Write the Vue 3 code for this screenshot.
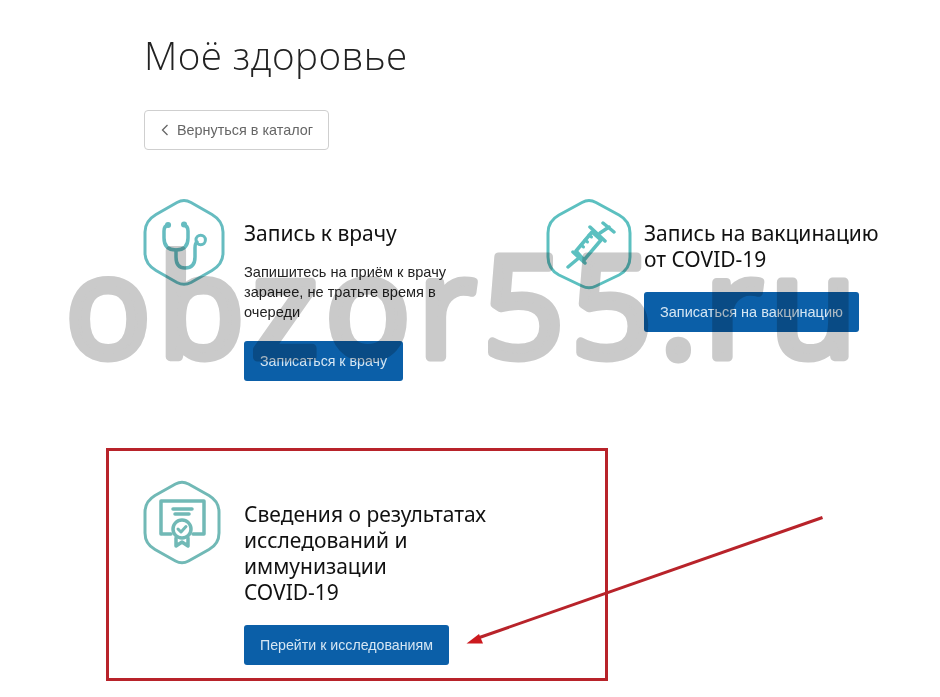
<template>
  <div class="page">
    <h1 class="title">Моё здоровье</h1>
    <a class="back">
      <svg class="chev" width="8" height="12" viewBox="0 0 8 12"><path d="M6.500 1 1.500 6l5 5" /></svg>
      <span>Вернуться в каталог</span>
    </a>
    <div class="grid">
      <section class="card">
        <svg class="icon" width="90" height="95" viewBox="0 0 90 95">
          <g class="ln c1">
            <path d="M37 7.500Q44 3.500 51 7.500L72 19.500Q83 26 83 37V58Q83 69 72 75.500L51 87.500Q44 91 37 87.500L16 75.500Q5 69 5 58V37Q5 26 16 19.500Z" />
            <path class="thick" d="M28 30Q24 31 24 36V43Q24 55 36 55Q48 55 48 43V36Q48 31 44 30" />
            <path class="thick" d="M36 55V62Q36 73 45 73Q55 73 55 62V53Q55 48 57 47" />
            <circle cx="60.700" cy="45" r="4.700" />
            <path class="dot" d="M28 30h.1M44 29.500h.1" />
          </g>
        </svg>
        <div class="body">
          <h2>Запись к врачу</h2>
          <p>Запишитесь на приём к врачу<br />заранее, не тратьте время в<br />очереди</p>
          <a class="btn">Записаться к врачу</a>
        </div>
      </section>
      <section class="card">
        <svg class="icon shift" width="90" height="95" viewBox="0 0 90 95">
          <g class="ln c2">
            <path d="M39 7.500Q46 3.500 53 7.500L76 20Q87 26 87 38V62Q87 74 76 80L53 91Q46 94.500 39 91L16 80Q5 74 5 62V38Q5 26 16 20Z" />
            <path class="thick" d="M33 56 49 37 58 45 41 65Z" />
            <path class="thick" d="M37 62 25 72M30 57 42 68M47 32 62 46M57 38 66 32M60 28 71 37" />
            <path d="M38 50 40.500 52M42 45 44.500 47M46 40 48.500 42" />
          </g>
        </svg>
        <div class="body">
          <h2>Запись на вакцинацию<br />от COVID-19</h2>
          <a class="btn wide">Записаться на вакцинацию</a>
        </div>
      </section>
      <section class="card">
        <svg class="icon third" width="85" height="90" viewBox="0 -1 85 90">
          <g class="ln c3">
            <path d="M34.500 7Q41 3.500 47.500 7L68 18.500Q78 24.500 78 35V56Q78 67 68 72.500L47.500 84Q41 87.500 34.500 84L14 72.500Q4 67 4 56V35Q4 24.500 14 18.500Z" />
            <path class="thick" d="M30 57H20V24H63V57H52" />
            <path class="thick" d="M32 32H51M34 37H48" />
            <circle class="thick" cx="41" cy="52" r="9" />
            <path d="M37 52 40 55 45 49.500" />
            <path class="thick" d="M35 61V69L41 65 47 69V61" />
          </g>
        </svg>
        <div class="body">
          <h2>Сведения о результатах<br />исследований и<br />иммунизации<br />COVID-19</h2>
          <a class="btn">Перейти к исследованиям</a>
        </div>
      </section>
    </div>

    <svg class="mark" width="940" height="697" viewBox="0 0 940 697">
      <text x="66" y="357" textLength="790" lengthAdjust="spacing">obzor55.ru</text>
    </svg>
    <div class="frame"></div>
    <svg class="arrow" width="940" height="697" viewBox="0 0 940 697">
      <path class="shaft" d="M822.500 517.500 478 638" />
      <path class="head" d="M466.500 643.500 479 634 483 643.500Z" />
    </svg>
  </div>
</template>

<script setup>
</script>

<style>
html, body { margin: 0; background: #fff; }
</style>

<style scoped>
.page {
  position: relative;
  width: 940px;
  height: 697px;
  overflow: hidden;
  box-sizing: border-box;
  padding: 30px 0 0 144px;
  font-family: "Liberation Sans", Arial, sans-serif;
  color: #1a1a1a;
}
.title {
  margin: 0 0 30px;
  height: 50px;
  font: 300 38.600px/50px "Open Sans", "Noto Sans", sans-serif;
  letter-spacing: 0.4px;
  color: #222;
}
.back {
  display: flex;
  align-items: center;
  box-sizing: border-box;
  width: 185px;
  height: 40px;
  padding-left: 16px;
  gap: 8px;
  border: 1px solid #cfcfcf;
  border-radius: 4px;
  color: #666;
  font-size: 14.400px;
}
.chev path { fill: none; stroke: #666; stroke-width: 1.300; }
.grid {
  display: grid;
  grid-template-columns: 400px 360px;
  row-gap: 95px;
  margin-top: 45px;
}
.card { display: flex; align-items: flex-start; }
.icon { flex: none; margin-left: -4px; margin-right: 14px; }
.shift { margin-left: -1px; margin-right: 11px; }
.third { margin-left: -3px; margin-right: 18px; }
.body { padding-top: 25px; }
h2 {
  margin: 0;
  font: 400 21px/26px "Noto Sans", "Open Sans", sans-serif;
  color: #111;
}
p {
  margin: 16px 0 19px;
  font-size: 14.600px;
  line-height: 20px;
  color: #222;
}
h2 + .btn { margin-top: 20px; }
.btn {
  display: inline-flex;
  align-items: center;
  height: 40px;
  padding: 0 16px;
  border-radius: 3px;
  background: #0b5fa8;
  color: #d5e6f3;
  font-size: 14.200px;
}
.btn.wide { font-size: 14.500px; }
.ln { fill: none; stroke-width: 3; stroke-linecap: round; stroke-linejoin: round; }
.thick { stroke-width: 3.500; }
.c1 { stroke: #66bcc0; }
.c2 { stroke: #5cc0c0; }
.c3 { stroke: #71b9b6; }
.dot { stroke-width: 6; }
.mark {
  position: absolute;
  left: 0;
  top: 0;
  mix-blend-mode: multiply;
  pointer-events: none;
}
.mark text {
  font: 400 140px "Open Sans", sans-serif;
  fill: #cacaca;
  stroke: #cacaca;
  stroke-width: 9;
  stroke-linejoin: round;
}
.frame {
  position: absolute;
  left: 106px;
  top: 448px;
  width: 502px;
  height: 233px;
  box-sizing: border-box;
  border: 3px solid #b8232a;
}
.arrow { position: absolute; left: 0; top: 0; pointer-events: none; }
.shaft { stroke: #b8232a; stroke-width: 3; fill: none; }
.head { fill: #cc1a1f; }
</style>
